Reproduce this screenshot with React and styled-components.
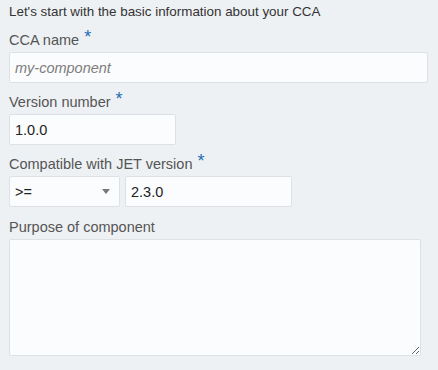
import React from 'react';
import styled, { createGlobalStyle } from 'styled-components';

const Global = createGlobalStyle`
  body {
    margin: 0;
    background: #eef1f4;
    font-family: "Liberation Sans", Arial, sans-serif;
  }
`;

const Page = styled.div`
  padding: 4px 9px 14px 9px;
  min-height: 370px;
  box-sizing: border-box;
`;

const Intro = styled.div`
  font-size: 13.4px;
  line-height: 16px;
  color: #333;
`;

const Field = styled.div`
  margin-top: ${(p) => p.$top || 11}px;
`;

const Label = styled.div`
  font-size: 14.5px;
  line-height: 17px;
  color: #555;
  margin-bottom: 3px;
  display: flex;
  align-items: flex-start;
`;

const Required = styled.span`
  color: #1f6eb3;
  font-size: 18px;
  line-height: 12px;
  margin-left: 5px;
  margin-top: -1px;
`;

const Input = styled.input`
  box-sizing: border-box;
  width: ${(p) => p.$w || 419}px;
  height: 31px;
  border: 1px solid #dde1e5;
  border-radius: 2px;
  background: #fbfcfd;
  padding: 0 5px;
  font-family: inherit;
  font-size: 14.5px;
  color: #222;
  outline: none;
  &::placeholder {
    color: #7e7e7e;
    font-style: italic;
  }
`;

const Row = styled.div`
  display: flex;
  gap: 5px;
`;

const Select = styled.div`
  box-sizing: border-box;
  width: 111px;
  height: 31px;
  border: 1px solid #dde1e5;
  border-radius: 2px;
  background: #fbfcfd;
  padding: 0 9px 0 5px;
  display: flex;
  align-items: center;
  justify-content: space-between;
  font-size: 14.5px;
  color: #222;
`;

const Caret = styled.span`
  width: 0;
  height: 0;
  border-left: 4.5px solid transparent;
  border-right: 4.5px solid transparent;
  border-top: 5px solid #777;
`;

const TextArea = styled.textarea`
  box-sizing: border-box;
  display: block;
  width: 412px;
  height: 117px;
  border: 1px solid #dde1e5;
  border-radius: 2px;
  background: #fbfcfd;
  font-family: inherit;
  font-size: 14px;
  outline: none;
`;

export default function App() {
  return (
    <Page>
      <Global />
      <Intro>Let's start with the basic information about your CCA</Intro>
      <Field $top={12}>
        <Label>CCA name<Required>*</Required></Label>
        <Input placeholder="my-component" />
      </Field>
      <Field>
        <Label>Version number<Required>*</Required></Label>
        <Input $w={167} defaultValue="1.0.0" />
      </Field>
      <Field>
        <Label>Compatible with JET version<Required>*</Required></Label>
        <Row>
          <Select>
            <span>&gt;=</span>
            <Caret />
          </Select>
          <Input $w={167} defaultValue="2.3.0" />
        </Row>
      </Field>
      <Field $top={12}>
        <Label>Purpose of component</Label>
        <TextArea />
      </Field>
    </Page>
  );
}
